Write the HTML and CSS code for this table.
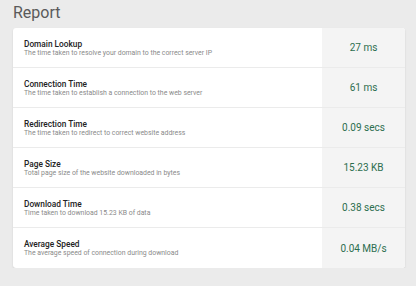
FILE: index.html
```html
<!DOCTYPE html>
<html lang="en">
<head>
  <meta charset="UTF-8" />
  <title>Report</title>
  <link rel="stylesheet" href="styles.css">
</head>
<body>
  <h2 class="page-title">Report</h2>
  <div class="report">
    <div class="report-row">
      <div class="report-info">
        <strong>Domain Lookup</strong>
        <span>The time taken to resolve your domain to the correct server IP</span>
      </div>
      <div class="report-value">27 ms</div>
    </div>
    <div class="report-row">
      <div class="report-info">
        <strong>Connection Time</strong>
        <span>The time taken to establish a connection to the web server</span>
      </div>
      <div class="report-value">61 ms</div>
    </div>
    <div class="report-row">
      <div class="report-info">
        <strong>Redirection Time</strong>
        <span>The time taken to redirect to correct website address</span>
      </div>
      <div class="report-value">0.09 secs</div>
    </div>
    <div class="report-row">
      <div class="report-info">
        <strong>Page Size</strong>
        <span>Total page size of the website downloaded in bytes</span>
      </div>
      <div class="report-value">15.23 KB</div>
    </div>
    <div class="report-row">
      <div class="report-info">
        <strong>Download Time</strong>
        <span>Time taken to download 15.23 KB of data</span>
      </div>
      <div class="report-value">0.38 secs</div>
    </div>
    <div class="report-row">
      <div class="report-info">
        <strong>Average Speed</strong>
        <span>The average speed of connection during download</span>
      </div>
      <div class="report-value">0.04 MB/s</div>
    </div>
  </div>
</body>
</html>
```

FILE: styles.css
```css
body {
  font-family: Roboto, 'Liberation Sans', Arial, sans-serif;
  background: #ebebeb;
  margin: 0;
  padding: 0 11px 0 13px;
  color: #222;
}
.page-title {
  font-size: 16px;
  font-weight: 400;
  color: #5a5a5a;
  margin: 0;
  padding-top: 4px;
  height: 24px;
  line-height: 18px;
}
.report {
  background: #fff;
  border-radius: 3px;
  box-shadow: 0 1px 2px rgba(0,0,0,0.12);
  overflow: hidden;
}
.report-row {
  display: grid;
  grid-template-columns: 1fr 83px;
  height: 40px;
  border-bottom: 1px solid #ebebeb;
  box-sizing: border-box;
}
.report-row:last-child {
  border-bottom: none;
}
.report-info {
  display: flex;
  flex-direction: column;
  justify-content: center;
  padding-left: 11px;
  padding-top: 1px;
}
.report-info strong {
  font-size: 8.3px;
  font-weight: 500;
  color: #222;
  line-height: 10px;
}
.report-info span {
  font-size: 6.9px;
  color: #8a8a8a;
  line-height: 9px;
}
.report-value {
  background: #f4f4f4;
  display: flex;
  align-items: center;
  justify-content: center;
  font-size: 10px;
  color: #2c6e4f;
}
```
